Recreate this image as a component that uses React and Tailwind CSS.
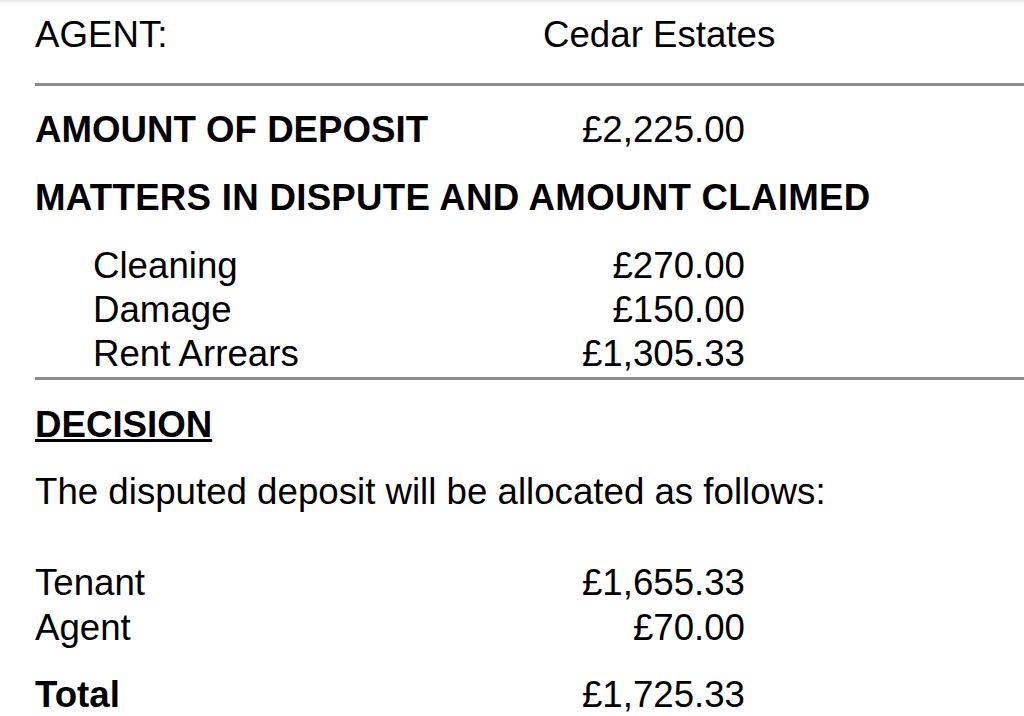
import React from 'react';

const Rule = ({ className = '' }) => (
  <div className={`h-[3px] bg-[#8c8c8c] ${className}`} />
);

const Row = ({ label, value, indent = false, bold = false, className = '' }) => (
  <div className={`flex h-[44px] leading-[44px] ${className}`}>
    <div className={`w-[508px] ${indent ? 'pl-[58px]' : ''} ${bold ? 'font-bold' : ''}`}>{label}</div>
    <div className="w-[202px] text-right">{value}</div>
  </div>
);

const App = () => {
  return (
    <div className="w-[1024px] h-[716px] overflow-hidden bg-white text-black text-[36.67px] font-['Liberation_Sans',Arial,sans-serif]">
      <div className="h-[4px] bg-gradient-to-b from-[#e4e4e4] to-white" />
      <div className="pl-[35px]">
        <div className="flex h-[44px] leading-[44px] mt-[9px]">
          <div className="w-[508px]">AGENT:</div>
          <div>Cedar Estates</div>
        </div>

        <Rule className="mt-[26px]" />

        <Row label="AMOUNT OF DEPOSIT" value="£2,225.00" bold className="mt-[22px]" />

        <div className="h-[44px] leading-[44px] font-bold tracking-[0.27px] mt-[24px]">
          MATTERS IN DISPUTE AND AMOUNT CLAIMED
        </div>

        <div className="mt-[24px]">
          <Row label="Cleaning" value="£270.00" indent />
          <Row label="Damage" value="£150.00" indent />
          <Row label="Rent Arrears" value="£1,305.33" indent />
        </div>

        <Rule className="mt-[1px]" />

        <div className="h-[44px] leading-[44px] font-bold mt-[23px]">
          <span className="underline decoration-[2.5px] underline-offset-[2px]">DECISION</span>
        </div>

        <div className="h-[44px] leading-[44px] mt-[23px]">
          The disputed deposit will be allocated as follows:
        </div>

        <div className="mt-[47px]">
          <Row label="Tenant" value="£1,655.33" />
          <Row label="Agent" value="£70.00" className="mt-[1px]" />
        </div>

        <Row label="Total" value="£1,725.33" bold className="mt-[23px]" />
      </div>
    </div>
  );
};

export default App;
